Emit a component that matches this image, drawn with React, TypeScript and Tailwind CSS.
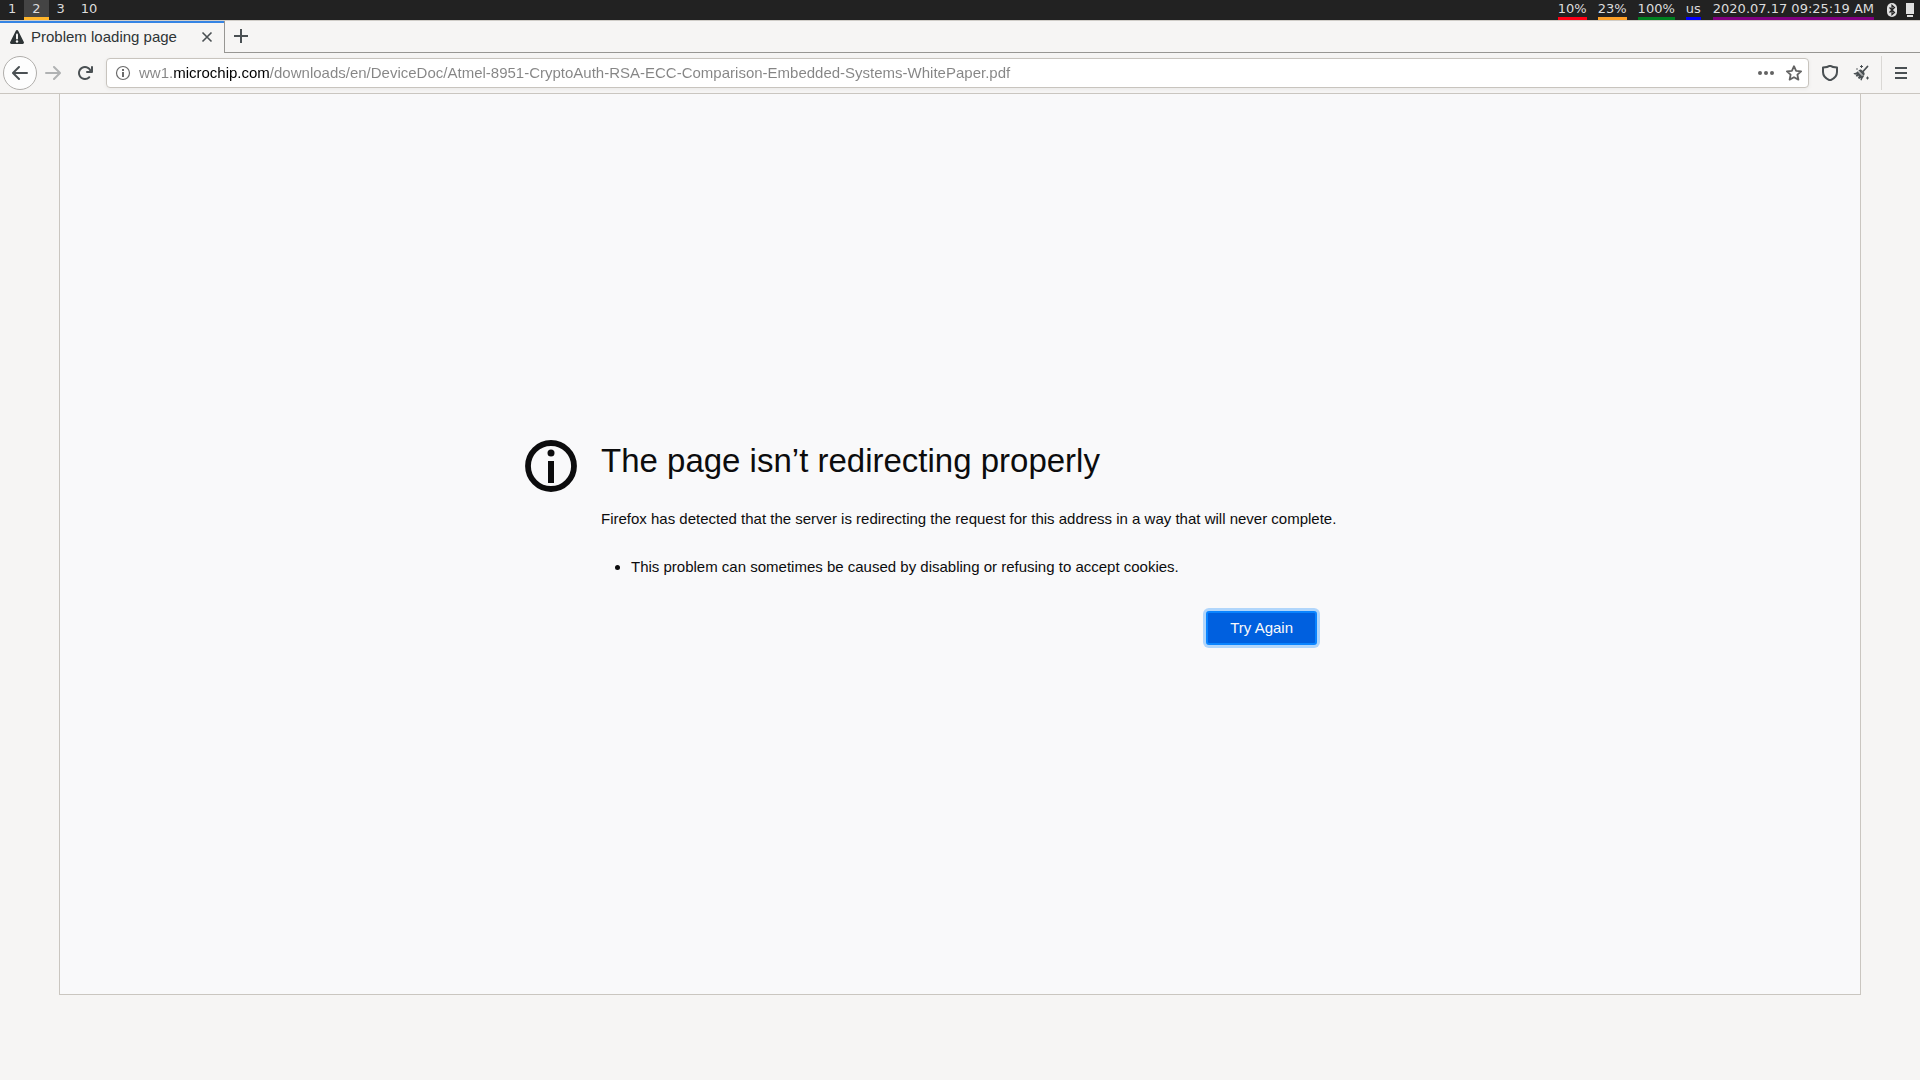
import type { ReactNode } from 'react'

interface StatusItem {
  label: string
  color: string
}

const workspaces = ['1', '2', '3', '10']

const statusItems: StatusItem[] = [
  { label: '10%', color: 'border-[#ff0014]' },
  { label: '23%', color: 'border-[#ffa127]' },
  { label: '100%', color: 'border-[#008020]' },
  { label: 'us', color: 'border-[#0000ff]' },
]

const pageUrl =
  'ww1.microchip.com/downloads/en/DeviceDoc/Atmel-8951-CryptoAuth-RSA-ECC-Comparison-Embedded-Systems-WhitePaper.pdf'

function StatusBar() {
  return (
    <div className="flex h-5 items-stretch justify-between bg-[#222222] font-['DejaVu_Sans',sans-serif] text-[13px] leading-[17px] text-[#dcdcdc]">
      <div className="flex">
        {workspaces.map((name) => (
          <button
            key={name}
            className={
              name === '2'
                ? 'border-b-3 border-[#ffb52a] bg-[#444444] px-2'
                : 'border-b-3 border-transparent px-2'
            }
          >
            {name}
          </button>
        ))}
      </div>
      <div className="flex items-stretch">
        <div className="mr-3 flex gap-[11px]">
          {statusItems.map((item) => (
            <span key={item.label} className={`border-b-3 ${item.color}`}>
              {item.label}
            </span>
          ))}
        </div>
        <span className="border-b-3 border-[#800080]">2020.07.17 09:25:19 AM</span>
        <div className="mr-1.5 ml-3 flex items-center gap-2">
          <svg className="h-4 w-3" viewBox="0 0 12 16">
            <rect x="1" y="1" width="10" height="14" rx="5" fill="#e0e0e0" />
            <path d="M3.5 5.5l5 5L6 12.7V3.3l2.5 2.2-5 5" fill="none" stroke="#222" strokeWidth="1.2" />
          </svg>
          <svg className="h-4 w-2" viewBox="0 0 8 16">
            <path d="M0 1h8v11H0zM1 13h6v2H1z" fill="#e0e0e0" />
          </svg>
        </div>
      </div>
    </div>
  )
}

function TabBar() {
  return (
    <div className="flex h-[33px] border-t border-[#d0cdc8]">
      <div className="flex w-56 items-center border-t-2 border-[#3584e4] pr-[7px] pb-0.5 pl-[9px]">
        <svg className="mr-1.5 size-4 shrink-0" viewBox="0 0 16 16">
          <path
            d="M6.7 1.9L1.2 12.9A1.4 1.4 0 0 0 2.5 15h11a1.4 1.4 0 0 0 1.3-2.1L9.3 1.9a1.45 1.45 0 0 0-2.6 0z"
            fill="#2e3436"
          />
          <path d="M8 5.5v4" stroke="#f6f5f4" strokeWidth="2" strokeLinecap="round" />
          <circle cx="8" cy="12.5" r="1.2" fill="#f6f5f4" />
        </svg>
        <span className="grow truncate text-[15px] leading-5 text-[#2e3436]">Problem loading page</span>
        <button aria-label="Close tab" className="p-1">
          <svg className="size-3" viewBox="0 0 12 12">
            <path d="M1.5 1.5l9 9m0-9l-9 9" stroke="#4a5053" strokeWidth="1.6" />
          </svg>
        </button>
      </div>
      <div className="flex grow items-center border-b border-l border-[#979693] pb-px pl-2">
        <button aria-label="Open a new tab">
          <svg className="size-4" viewBox="0 0 16 16">
            <path d="M8 1v14M1 8h14" stroke="#4a5053" strokeWidth="2" />
          </svg>
        </button>
      </div>
    </div>
  )
}

interface ToolButtonProps {
  label: string
  className?: string
  children: ReactNode
}

function ToolButton({ label, className = 'w-8 text-[#4a5053]', children }: ToolButtonProps) {
  return (
    <button aria-label={label} className={`flex shrink-0 items-center justify-center ${className}`}>
      <svg className="size-4" viewBox="0 0 16 16" fill="currentColor">
        {children}
      </svg>
    </button>
  )
}

function NavBar() {
  return (
    <div className="flex h-[41px] items-center border-b border-[#cac6c0] pl-[3px]">
      <ToolButton
        label="Back"
        className="h-[34px] w-[34px] rounded-full border border-[#b0aeab] bg-[#fdfdfd] text-[#4a5053]"
      >
        <path d="M15 7H3.414l4.293-4.293a1 1 0 0 0-1.414-1.414l-6 6a1 1 0 0 0 0 1.414l6 6a1 1 0 0 0 1.414-1.414L3.414 9H15a1 1 0 0 0 0-2z" />
      </ToolButton>
      <ToolButton label="Forward" className="w-8 text-[#4a5053] opacity-40">
        <path d="M1 7h11.586L8.293 2.707a1 1 0 0 1 1.414-1.414l6 6a1 1 0 0 1 0 1.414l-6 6a1 1 0 0 1-1.414-1.414L12.586 9H1a1 1 0 0 1 0-2z" />
      </ToolButton>
      <ToolButton label="Reload">
        <path d="M15 1a1 1 0 0 0-1 1v2.418A6.995 6.995 0 1 0 8 15a6.954 6.954 0 0 0 4.95-2.05 1 1 0 0 0-1.414-1.414A5.019 5.019 0 1 1 12.549 6H10a1 1 0 0 0 0 2h5a1 1 0 0 0 1-1V2a1 1 0 0 0-1-1z" />
      </ToolButton>
      <div className="ml-[5px] flex h-[30px] grow items-center rounded-[4px] border border-[#c8c4be] bg-white pl-2 shadow-[0_1px_4px_rgba(0,0,0,0.06)]">
        <button aria-label="Site information">
          <svg className="size-4" viewBox="0 0 16 16">
            <circle cx="8" cy="8" r="6.5" fill="none" stroke="#6b6b6b" strokeWidth="1.2" />
            <path d="M7 7h2v5H7zM7 4h2v2H7z" fill="#6b6b6b" />
          </svg>
        </button>
        {/* the host name is darker than the rest of the address */}
        <input
          type="text"
          aria-label="Address"
          defaultValue={pageUrl}
          className="ml-2 h-7 grow bg-[linear-gradient(to_right,#858585_34px,#000000_34px,#000000_131px,#858585_131px)] bg-clip-text pb-0.5 text-[15px] text-transparent outline-none"
        />
        <ToolButton label="Page actions" className="w-7 text-[#636363]">
          <circle cx="2" cy="8" r="2" />
          <circle cx="8" cy="8" r="2" />
          <circle cx="14" cy="8" r="2" />
        </ToolButton>
        <ToolButton label="Bookmark this page" className="w-7 text-[#636363]">
          <path
            d="M8 1.2l2.1 4.6 5 .5-3.7 3.4 1 4.9L8 12.2l-4.4 2.4 1-4.9L.9 6.3l5-.5z"
            fill="none"
            stroke="currentColor"
            strokeWidth="1.8"
            strokeLinejoin="round"
          />
        </ToolButton>
      </div>
      <ToolButton label="Protections" className="ml-[5px] w-8 text-[#4a5053]">
        <path
          d="M8 .6C6 2 3.4 2.4 1 2.6V7c0 4 2.5 6.7 7 8.4 4.5-1.7 7-4.4 7-8.4V2.6C12.6 2.4 10 2 8 .6z"
          fill="none"
          stroke="currentColor"
          strokeWidth="2"
          strokeLinejoin="round"
        />
      </ToolButton>
      <ToolButton label="Clean up" className="w-[30px] text-[#4a5053]">
        <path d="M14.5 1.5L10 6.5" stroke="currentColor" strokeWidth="1.8" strokeLinecap="round" />
        <path d="M6.8 4.7c.8-.3 1.6-.1 2.2.5l2 2c.6.6.8 1.4.5 2.2l-.6 1.5-5.6-5.6z" />
        <path d="M4.9 6.3C3.7 7.6 2.2 8.2.3 8.3l1.7 1.5 1.6-.5-.9 1.6 1.3.8 2.2-1.3-1.3 2.3 1.2 1.4 1.8-1-.5 2 1.2.5c.5-1.8 1.3-3.2 2.4-4.4z" />
        <path d="M5.8 7.3l3.6 3.6" stroke="#f6f5f4" strokeWidth="0.8" />
        <path d="M8.5 0v3M7 1.5h3M14.5 11.5v3M13 13h3" stroke="currentColor" strokeWidth="1" />
        <circle cx="4" cy="4" r="0.8" />
      </ToolButton>
      <div className="ml-[5px] h-[34px] w-px bg-[#dad8d5]" />
      <ToolButton label="Menu" className="w-[38px] text-[#4a5053]">
        <path d="M2 2h12v2H2zM2 7h12v2H2zM2 12h12v2H2z" />
      </ToolButton>
    </div>
  )
}

function ErrorPage() {
  return (
    <main className="mx-[59px] grid h-[901px] grid-cols-[1fr_718px_1fr] content-center border-x border-b border-[#cac6c0] bg-[#f9f9fa] pb-1.5 text-[#0c0c0d]">
      <svg className="mt-[3px] mr-6 size-[52px] justify-self-end" viewBox="0 0 52 52">
        <circle cx="26" cy="26" r="23" fill="none" stroke="#0c0c0d" strokeWidth="5.8" />
        <circle cx="26" cy="13" r="3.5" fill="#0c0c0d" />
        <path d="M23 21h6v22h-6z" fill="#0c0c0d" />
      </svg>
      <div className="text-[15px] leading-6 whitespace-nowrap">
        <h1 className="text-[33px] leading-[48px]">The page isn’t redirecting properly</h1>
        <p className="mt-[22px]">
          Firefox has detected that the server is redirecting the request for this address in a way that will never
          complete.
        </p>
        <ul className="mt-6 list-disc pl-[30px]">
          <li>This problem can sometimes be caused by disabling or refusing to accept cookies.</li>
        </ul>
        <div className="mt-8 flex justify-end pr-0.5">
          <button className="h-[34px] rounded-[3px] border-2 border-[#0a84ff] bg-[#0060df] px-[22px] text-[#f9f9fa] shadow-[0_0_0_3px_rgba(10,132,255,0.3)]">
            Try Again
          </button>
        </div>
      </div>
    </main>
  )
}

export default function App() {
  return (
    <div className="min-h-screen bg-[#f6f5f4] font-['Liberation_Sans',Arial,sans-serif]">
      <StatusBar />
      <TabBar />
      <NavBar />
      <ErrorPage />
    </div>
  )
}
